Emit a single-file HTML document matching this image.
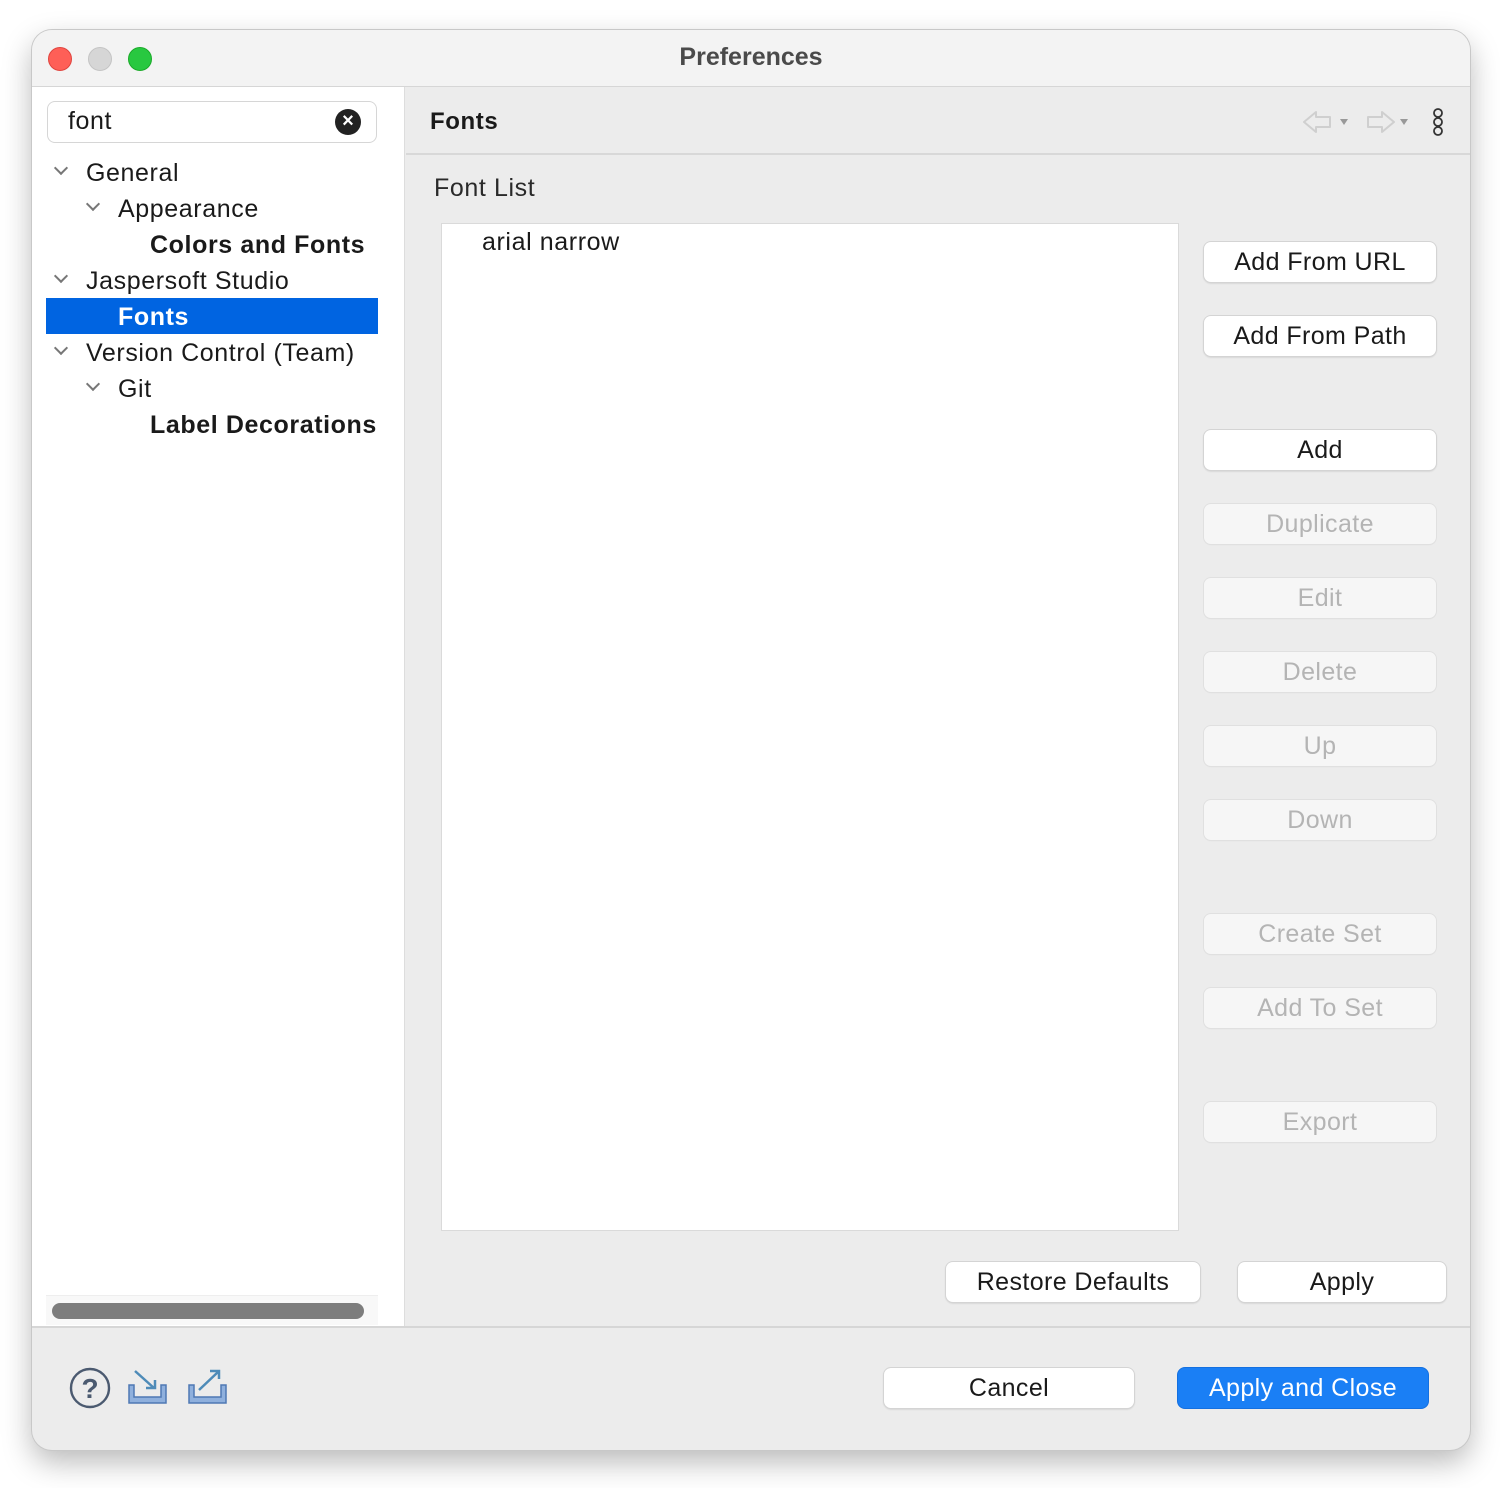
<!DOCTYPE html>
<html><head><meta charset="utf-8"><style>
*{box-sizing:border-box;margin:0;padding:0}
body{width:1500px;height:1488px;background:#fff;font-family:"Liberation Sans",sans-serif;position:relative;overflow:hidden;color:#1a1a1a}
.win{position:absolute;left:32px;top:30px;width:1438px;height:1420px;border-radius:20px;background:#ececec;box-shadow:0 0 0 1px #c8c8c8,0 12px 30px rgba(0,0,0,.28);overflow:hidden}
.title{position:absolute;left:0;top:0;width:100%;height:57px;background:#f3f3f3;border-bottom:1px solid #d6d6d6;text-align:center;line-height:55px;font-weight:bold;font-size:25px;color:#4a4a4a}
.dot{position:absolute;top:17px;width:24px;height:24px;border-radius:50%}
.a{position:absolute}
.left{left:0;top:57px;width:373px;height:1240px;background:#fff;border-right:1px solid #ddd}
.t{position:absolute;font-size:25px;white-space:nowrap;letter-spacing:0.6px}
.chev{position:absolute;width:10px;height:10px;border-right:2px solid #777;border-bottom:2px solid #777;transform:rotate(45deg)}
.btn{position:absolute;width:232px;height:40px;background:#fff;border-radius:7px;box-shadow:0 0 0 1px #d4d4d4,0 1px 2px rgba(0,0,0,.2);text-align:center;line-height:40px;font-size:25px;color:#1a1a1a;letter-spacing:0.4px}
.dis{background:#f6f6f6;color:#b4b4b4;box-shadow:0 0 0 1px #e0e0e0,0 1px 1px rgba(0,0,0,.08)}
</style></head><body>
<div class="win">
<div class="title">Preferences</div>
<div class="dot" style="left:16px;background:#fe5f57;border:1px solid #e0443e"></div>
<div class="dot" style="left:56px;background:#d6d6d6;border:1px solid #c4c4c4"></div>
<div class="dot" style="left:96px;background:#28c840;border:1px solid #1aab29"></div>

<div class="a left">
 <div class="a" style="left:15px;top:14px;width:330px;height:42px;border:1px solid #d6d6d6;border-radius:8px;background:#fff"></div>
 <div class="t" style="left:36px;top:20px">font</div>
 <div class="a" style="left:303px;top:22px;width:26px;height:26px;border-radius:50%;background:#222;color:#fff;font-size:20px;line-height:25px;text-align:center;font-weight:bold">×</div>
 <div class="chev" style="left:24px;top:76px"></div><div class="t" style="left:54px;top:72px">General</div>
 <div class="chev" style="left:56px;top:112px"></div><div class="t" style="left:86px;top:108px">Appearance</div>
 <div class="t" style="left:118px;top:144px;font-weight:bold">Colors and Fonts</div>
 <div class="chev" style="left:24px;top:184px"></div><div class="t" style="left:54px;top:180px">Jaspersoft Studio</div>
 <div class="a" style="left:14px;top:211px;width:332px;height:36px;background:#0064e1"></div>
 <div class="t" style="left:86px;top:216px;font-weight:bold;color:#fff">Fonts</div>
 <div class="chev" style="left:24px;top:256px"></div><div class="t" style="left:54px;top:252px">Version Control (Team)</div>
 <div class="chev" style="left:56px;top:292px"></div><div class="t" style="left:86px;top:288px">Git</div>
 <div class="t" style="left:118px;top:324px;font-weight:bold;width:228px;overflow:hidden">Label Decorations</div>
 <div class="a" style="left:14px;top:1208px;width:332px;height:30px;background:#f8f8f8;border-top:1px solid #eee"></div>
 <div class="a" style="left:20px;top:1216px;width:312px;height:16px;border-radius:8px;background:#7d7d7d"></div>
</div>

<div class="a" style="left:374px;top:57px;width:1064px;height:68px;border-bottom:2px solid #d8d8d8"></div>
<div class="t" style="left:398px;top:78px;font-weight:bold;font-size:24px">Fonts</div>
<svg class="a" style="left:1268px;top:76px" width="150" height="34" viewBox="0 0 150 34">
 <path d="M4 16 L16 6 V11 H30 V21 H16 V26 Z" fill="none" stroke="#cfcfcf" stroke-width="2" stroke-linejoin="round"/>
 <path d="M40 13 L48 13 L44 19Z" fill="#999"/>
 <path d="M94 16 L82 6 V11 H68 V21 H82 V26 Z" fill="none" stroke="#cfcfcf" stroke-width="2" stroke-linejoin="round"/>
 <path d="M100 13 L108 13 L104 19Z" fill="#999"/>
 <circle cx="138" cy="7" r="4" fill="none" stroke="#333" stroke-width="1.8"/>
 <circle cx="138" cy="16" r="4" fill="none" stroke="#333" stroke-width="1.8"/>
 <circle cx="138" cy="25" r="4" fill="none" stroke="#333" stroke-width="1.8"/>
</svg>
<div class="t" style="left:402px;top:144px;color:#2a2a2a">Font List</div>
<div class="a" style="left:409px;top:193px;width:738px;height:1008px;background:#fff;border:1px solid #dadada"></div>
<div class="t" style="left:450px;top:198px">arial narrow</div>

<div class="btn" style="left:1172px;top:212px">Add From URL</div>
<div class="btn" style="left:1172px;top:286px">Add From Path</div>
<div class="btn" style="left:1172px;top:400px">Add</div>
<div class="btn dis" style="left:1172px;top:474px">Duplicate</div>
<div class="btn dis" style="left:1172px;top:548px">Edit</div>
<div class="btn dis" style="left:1172px;top:622px">Delete</div>
<div class="btn dis" style="left:1172px;top:696px">Up</div>
<div class="btn dis" style="left:1172px;top:770px">Down</div>
<div class="btn dis" style="left:1172px;top:884px">Create Set</div>
<div class="btn dis" style="left:1172px;top:958px">Add To Set</div>
<div class="btn dis" style="left:1172px;top:1072px">Export</div>

<div class="btn" style="left:914px;top:1232px;width:254px">Restore Defaults</div>
<div class="btn" style="left:1206px;top:1232px;width:208px">Apply</div>

<div class="a" style="left:0;top:1296px;width:100%;height:2px;background:#d6d6d6"></div>
<svg class="a" style="left:36px;top:1336px" width="170" height="44" viewBox="0 0 170 44">
 <circle cx="22" cy="22" r="19" fill="none" stroke="#4b5a70" stroke-width="2.4"/>
 <text x="22" y="32" text-anchor="middle" font-family="Liberation Sans" font-weight="bold" font-size="28" fill="#4b5a70">?</text>
 <path d="M61 19 H66 V31 H93 V19 H98 V37 H61 Z" fill="#8fb0dd" stroke="#4e78b4" stroke-width="1.5"/>
 <path d="M67 5 L86 22 M78 22 H87 V14" fill="none" stroke="#4e8bb8" stroke-width="2.5"/>
 <path d="M121 19 H126 V31 H153 V19 H158 V37 H121 Z" fill="#8fb0dd" stroke="#4e78b4" stroke-width="1.5"/>
 <path d="M131 24 L150 6 M142 5 H151 V13" fill="none" stroke="#4e8bb8" stroke-width="2.5"/>
</svg>
<div class="btn" style="left:852px;top:1338px;width:250px">Cancel</div>
<div class="btn" style="left:1146px;top:1338px;width:250px;background:#1a7ff5;color:#fff;box-shadow:0 0 0 1px #1470e0">Apply and Close</div>
</div>
</body></html>
